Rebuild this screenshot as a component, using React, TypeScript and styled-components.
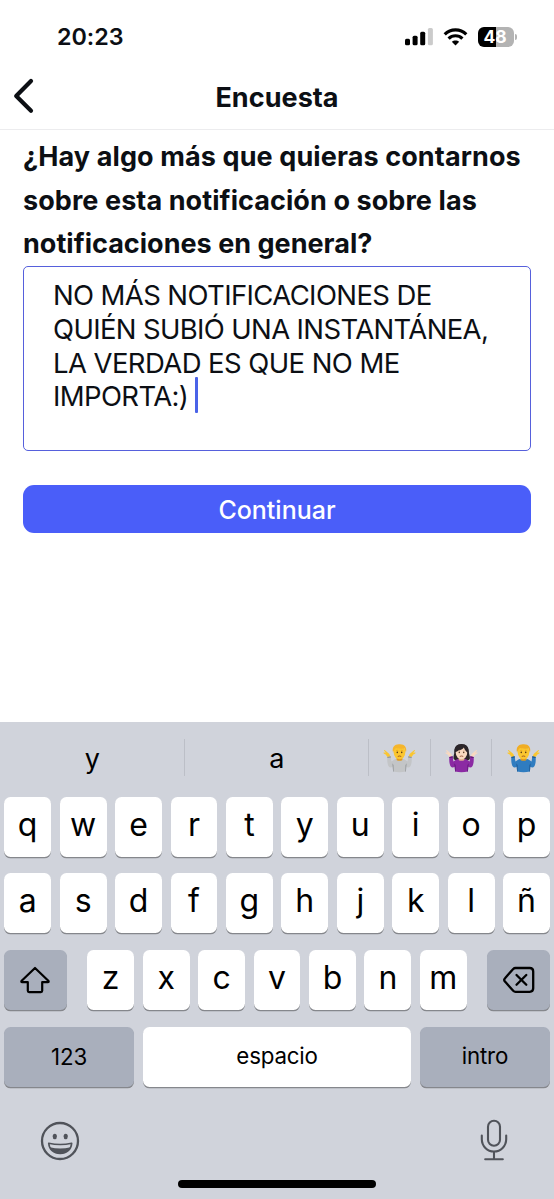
import React from 'react';
import styled, { createGlobalStyle } from 'styled-components';

const GlobalStyle = createGlobalStyle`
  * { box-sizing: border-box; }
  body { margin: 0; background: #fff; font-family: Inter, "Liberation Sans", sans-serif; color: #0c0f14; }
`;

const Screen = styled.div`
  width: 554px;
  height: 1199px;
  display: flex;
  flex-direction: column;
  background: #fff;
  overflow: hidden;
`;

const StatusBar = styled.div`
  height: 65px;
  flex: none;
  display: flex;
  justify-content: space-between;
  padding: 20px 37px 0 57px;
`;

const Time = styled.div`
  font-size: 23.3px;
  font-weight: 600;
  line-height: 34px;
  letter-spacing: -0.05px;
`;

const StatusIcons = styled.div`
  display: flex;
  align-items: flex-start;
  padding-top: 7px;
`;

const SignalSvg = styled.svg`
  margin-right: 10px;
`;

const WifiSvg = styled.svg`
  margin-right: 10px;
`;

const Battery = styled.div`
  width: 36px;
  height: 19.5px;
  border-radius: 6px;
  background: linear-gradient(90deg, #000 0 17.5px, #b3b3b3 17.5px);
  color: #fff;
  font-size: 17.5px;
  font-weight: 700;
  line-height: 20px;
  text-align: center;
  padding-right: 2px;
`;

const BatteryTip = styled.div`
  width: 2px;
  height: 6px;
  margin: 7px 0 0 1px;
  border-radius: 0 2px 2px 0;
  background: #b3b3b3;
`;

const NavBar = styled.header`
  height: 65px;
  flex: none;
  display: grid;
  grid-template-columns: 60px 1fr 60px;
  align-items: center;
  border-bottom: 1px solid #ececee;
`;

const BackButton = styled.button`
  border: 0;
  background: none;
  padding: 0 0 2px 13px;
  display: flex;
`;

const Title = styled.h1`
  margin: 0;
  padding-top: 1px;
  text-align: center;
  font-size: 27px;
  line-height: 32px;
  font-weight: 700;
  letter-spacing: 0.05px;
`;

const Content = styled.main`
  flex: 1;
  padding: 4px 23px 0;
`;

const Question = styled.h2`
  margin: 0;
  padding-top: 1px;
  font-size: 27px;
  line-height: 43.7px;
  font-weight: 700;
  height: 132px;
`;

const Line = styled.span<{ $spacing: number }>`
  display: block;
  white-space: nowrap;
  letter-spacing: ${(p) => p.$spacing}px;
`;

const Answer = styled.div`
  height: 185px;
  border: 1.5px solid #5660dc;
  border-radius: 5px;
  padding: 12px 29px;
  font-size: 27.5px;
  line-height: 33.8px;
  font-weight: 400;
`;

const Caret = styled.i`
  display: inline-block;
  width: 3px;
  height: 36px;
  margin: -10px 0 0 7px;
  vertical-align: -7px;
  border-radius: 1px;
  background: #4a63e8;
`;

const Continue = styled.button`
  display: block;
  width: 100%;
  height: 48px;
  margin-top: 34px;
  padding: 1px 0 0;
  border: 0;
  border-radius: 11px;
  background: #4a5ef9;
  color: #fff;
  font: 500 25px/48px Inter, sans-serif;
`;

const Keyboard = styled.section`
  height: 477.4px;
  flex: none;
  background: #d0d3db;
  color: #000;
  display: flex;
  flex-direction: column;
`;

const Suggestions = styled.div`
  height: 75.2px;
  flex: none;
  display: grid;
  grid-template-columns: 184.5px 184.5px 61.7px 61.3px 1fr;
  padding: 17px 0 21px;
`;

const Suggestion = styled.div<{ $last?: boolean }>`
  display: flex;
  align-items: center;
  justify-content: center;
  padding: 2px 0 0 1px;
  font-size: 27px;
  line-height: 35px;
  border-right: ${(p) => (p.$last ? '0' : '1.5px solid #bcbfc7')};
`;

const Keys = styled.div`
  display: flex;
  flex-direction: column;
  gap: 17.2px;
  padding: 0 4.2px;
`;

const KeyRow = styled.div`
  display: flex;
  justify-content: space-between;
`;

const LetterGroup = styled.div`
  display: flex;
  gap: 8.55px;
`;

const Key = styled.button<{ $w?: number; $dark?: boolean; $label?: boolean; $drop?: number }>`
  width: ${(p) => p.$w ?? 46.9}px;
  height: 59.8px;
  margin-bottom: -0.3px;
  flex: none;
  border: 0;
  border-radius: 6.5px;
  padding: ${(p) => (p.$label ? `${p.$drop ?? 0}px 0 ${p.$drop ? 0 : 2}px` : '0 0 4px')};
  display: flex;
  align-items: center;
  justify-content: center;
  background: ${(p) => (p.$dark ? '#a9afbc' : '#fff')};
  box-shadow: 0 1.3px 0 #85878c;
  color: #000;
  font-family: Inter, sans-serif;
  font-size: ${(p) => (p.$label ? 22.3 : 32)}px;
  font-weight: 400;
  letter-spacing: ${(p) => (p.$label ? -0.2 : 0)}px;
  line-height: 1;
`;

const IconKey = styled(Key)`
  padding: 0;
`;

const BottomBar = styled.div`
  flex: 1;
  display: flex;
  justify-content: space-between;
  align-items: flex-start;
  padding: 33px 46.5px 0 40px;
`;

const SmileSvg = styled.svg`
  margin-top: 2px;
`;

const HomeIndicator = styled.div`
  width: 198px;
  height: 7.6px;
  flex: none;
  margin: 0 auto 11.5px;
  border-radius: 4px;
  background: #000;
`;

type ShrugProps = { shirt: string; shade: string; skin: string; skinShade: string; hair: string; long?: boolean };

const Shrug = ({ shirt, shade, skin, skinShade, hair, long }: ShrugProps) => (
  <svg width="33" height="30" viewBox="0 0 34 30">
    {long && <path d="M17 .5c-5 0-7.300 3.300-7.300 7.500 0 3-1.200 5-1 7.500.7 1.700 3 2.500 5 2.500h7c2.500 0 4.700-.8 5-2.500.2-2.500-1.200-4.500-1.200-7.500C24.500 3.800 22 .5 17 .5z" fill={hair} />}
    <path d="M5 14.500 2.700 11.500.8 10.300c-.6-.4-.3-1 .4-.9l1.700.3L1.200 7.600c-.4-.7.3-1.100.8-.6l4 3.400c1 .9 1.400 2.500 1.600 4z" fill={skin} />
    <path d="m29 14.500 2.300-3 1.900-1.200c.6-.4.3-1-.4-.9l-1.700.3 1.700-2.100c.4-.7-.3-1.100-.8-.6l-4 3.400c-1 .9-1.400 2.500-1.600 4z" fill={skin} />
    <path d="M4.500 13.900 7.900 13.300l.8 5.200 3.900-2.500q4.400 1.600 8.800 0l3.900 2.500.8-5.200 3.400.6c.4 4-.1 7.900-1.500 9.900-.9 1.300-3 1-4 .1l-.4 5.100q-6.600 1.200-13.200 0l-.4-5.100c-1 .9-3.100 1.200-4-.1-1.400-2-1.900-5.900-1.500-9.900z" fill={shirt} />
    <path d="m10 23.900-.3-3.600 1.100 2 .2 6.800-.6-.1zM24 23.900l.3-3.600-1.100 2-.2 6.800.6-.1z" fill={shade} />
    <path d="m4.500 13.900 3.400-.6.3 1.300-3.700.5zM29.500 13.900l-3.400-.6-.3 1.300 3.700.5z" fill={shade} />
    <path d="M14 14h6v3c-1.400 1.200-4.600 1.200-6 0z" fill={skinShade} />
    <ellipse cx="17" cy="9.200" rx="6" ry="7" fill={skin} />
    <path d={long ? 'M10 10C9 4 12 .8 17 .8S25 4 24 10c-1.800-1-3.500-3-4.600-5.800C17.500 7 13 7.500 10.800 9z' : 'M10.300 9C9 4 12 .7 16.500.8 22 .3 25 4 23.700 9c-.9-.9-1-3-1.700-4-3 .7-6.600.3-8.700-.6-1 1-1.900 3.200-3 4.600z'} fill={hair} />
    <ellipse cx="14.700" cy="9.200" rx=".7" ry=".9" fill="#4b2d16" />
    <ellipse cx="19.300" cy="9.200" rx=".7" ry=".9" fill="#4b2d16" />
    <path d="M13.600 7.400q1-.7 2 0M18.400 7.400q1-.7 2 0" stroke={skinShade} strokeWidth=".6" fill="none" />
    <path d="M15.600 13.200q1.400-.7 2.800 0" stroke="#8b3f22" strokeWidth=".8" fill="none" strokeLinecap="round" />
  </svg>
);

const Letters = ({ text }: { text: string }) => (
  <LetterGroup>
    {text.split('').map((c) => (
      <Key key={c}>{c}</Key>
    ))}
  </LetterGroup>
);

export default function App() {
  return (
    <Screen>
      <GlobalStyle />
      <StatusBar>
        <Time>20:23</Time>
        <StatusIcons>
          <SignalSvg width="28" height="19" viewBox="0 0 28 19">
            <rect x="0" y="11.700" width="5" height="6.600" rx="1.500" />
            <rect x="7.600" y="8.700" width="5" height="9.600" rx="1.500" />
            <rect x="15.200" y="4.700" width="5" height="13.600" rx="1.500" />
            <rect x="22.900" y="1" width="5" height="17.300" rx="1.500" fill="#cbcbcb" />
          </SignalSvg>
          <WifiSvg width="25" height="19" viewBox="0 0 25 19">
            <g fill="none" stroke="#000" strokeWidth="3.200">
              <path d="M1.700 7.300a15.500 15.500 0 0 1 21.600 0" />
              <path d="M5.600 11.600a9.800 9.800 0 0 1 13.800 0" />
            </g>
            <path d="M12.500 18.400 8.800 14.800c2-1.900 5.400-1.900 7.400 0z" />
          </WifiSvg>
          <Battery>48</Battery>
          <BatteryTip />
        </StatusIcons>
      </StatusBar>
      <NavBar>
        <BackButton aria-label="Atrás">
          <svg width="22" height="36" viewBox="0 0 22 36">
            <path d="M18 3 3.200 18 18 32.700" fill="none" stroke="#0c0f14" strokeWidth="4.200" strokeLinecap="round" strokeLinejoin="round" />
          </svg>
        </BackButton>
        <Title>Encuesta</Title>
      </NavBar>
      <Content>
        <Question>
          <Line $spacing={0.11}>¿Hay algo más que quieras contarnos</Line>
          <Line $spacing={0.08}>sobre esta notificación o sobre las</Line>
          <Line $spacing={0.02}>notificaciones en general?</Line>
        </Question>
        <Answer>
          <Line $spacing={-0.62}>NO MÁS NOTIFICACIONES DE</Line>
          <Line $spacing={-0.65}>QUIÉN SUBIÓ UNA INSTANTÁNEA,</Line>
          <Line $spacing={-0.58}>LA VERDAD ES QUE NO ME</Line>
          <Line $spacing={-0.62}>IMPORTA:)<Caret /></Line>
        </Answer>
        <Continue>Continuar</Continue>
      </Content>
      <Keyboard>
        <Suggestions>
          <Suggestion>y</Suggestion>
          <Suggestion>a</Suggestion>
          <Suggestion><Shrug shirt="#c3c5c7" shade="#8f9396" skin="#fbc62f" skinShade="#e39a1c" hair="#f5b52c" /></Suggestion>
          <Suggestion><Shrug shirt="#8b2aa3" shade="#5d1675" skin="#f8d9c0" skinShade="#dfae90" hair="#2b2529" long /></Suggestion>
          <Suggestion $last><Shrug shirt="#2f7cc0" shade="#1c5690" skin="#fbc62f" skinShade="#e39a1c" hair="#f0ad24" /></Suggestion>
        </Suggestions>
        <Keys>
          <KeyRow><Letters text="qwertyuiop" /></KeyRow>
          <KeyRow><Letters text="asdfghjklñ" /></KeyRow>
          <KeyRow>
            <IconKey $w={62.6} $dark aria-label="Mayúsculas">
              <svg width="32" height="28" viewBox="0 0 32 28">
                <path d="M16 2 29.300 14.800c.7.8.4 1.400-.5 1.400h-5.600v8.600q0 1.300-1.300 1.300H10.100q-1.300 0-1.300-1.300v-8.600H3.200c-.9 0-1.200-.6-.5-1.400z" fill="none" stroke="#000" strokeWidth="2.200" strokeLinejoin="round" />
              </svg>
            </IconKey>
            <Letters text="zxcvbnm" />
            <IconKey $w={62.6} $dark aria-label="Borrar">
              <svg width="32" height="28" viewBox="0 0 32 28">
                <g fill="none" stroke="#000" strokeWidth="2.300" strokeLinecap="round" strokeLinejoin="round">
                  <path d="M12.500 2h14.200q3.500 0 3.500 3.500v16.800q0 3.500-3.500 3.500H12.500q-1.300 0-2.300-1L2 15.600q-1.600-1.700 0-3.400L10.200 3q1-1 2.300-1z" />
                  <path d="m13.500 9 9.800 9.800m0-9.800-9.800 9.800" />
                </g>
              </svg>
            </IconKey>
          </KeyRow>
          <KeyRow>
            <Key $w={129.7} $dark $label $drop={1}>123</Key>
            <Key $w={268.8} $label>espacio</Key>
            <Key $w={129.7} $dark $label>intro</Key>
          </KeyRow>
        </Keys>
        <BottomBar>
          <SmileSvg width="40" height="40" viewBox="0 0 40 40">
            <circle cx="20" cy="20" r="18" fill="none" stroke="#50535a" strokeWidth="2.300" />
            <ellipse cx="14.800" cy="15.500" rx="2.100" ry="2.700" fill="#50535a" />
            <ellipse cx="25.700" cy="15.500" rx="2.100" ry="2.700" fill="#50535a" />
            <path d="M8.700 22.200q11.500 2.600 23 0c-.5 6.300-5 10.300-11.500 10.300s-11-4-11.500-10.300z" fill="none" stroke="#50535a" strokeWidth="1.600" strokeLinejoin="round" />
            <path d="M9.800 26.200q10.400 2.600 20.800 0c-1.500 4-5.200 6.300-10.400 6.300s-8.900-2.300-10.400-6.300z" fill="#50535a" />
          </SmileSvg>
          <svg width="28" height="42" viewBox="0 0 28 42">
            <g fill="none" stroke="#50535a" strokeWidth="2.100" strokeLinecap="round">
              <rect x="8" y="1.700" width="12" height="25" rx="6" />
              <path d="M1.800 16.500v3.800a12.200 12.200 0 0 0 24.400 0v-3.800M14 32.600v7.600M5.200 40.300h17.600" />
            </g>
          </svg>
        </BottomBar>
        <HomeIndicator />
      </Keyboard>
    </Screen>
  );
}
